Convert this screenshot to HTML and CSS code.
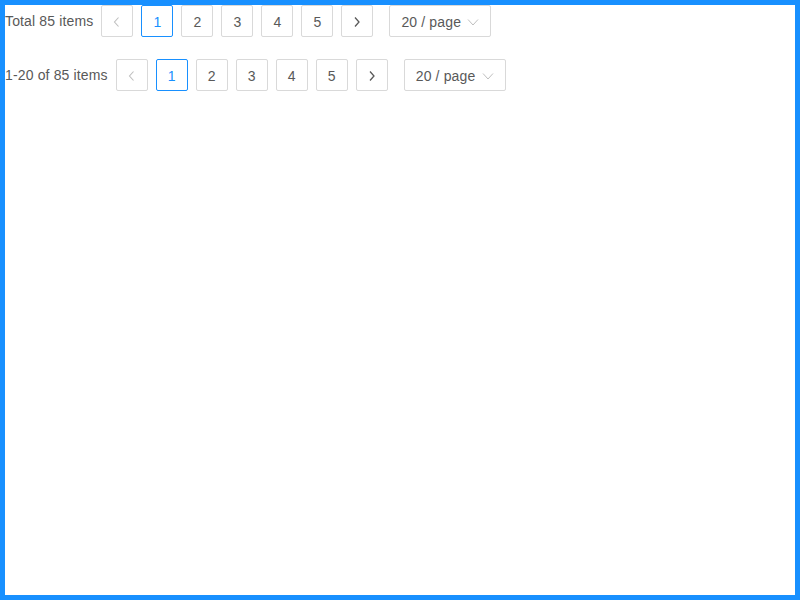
FILE: index.html
```html
<!DOCTYPE html>
<html>
<head>
<meta charset="utf-8">
<link rel="stylesheet" href="styles.css">
</head>
<body>
<div class="frame">
  <ul class="pagination">
    <li class="total">Total 85 items</li>
    <li class="item arrow disabled"><svg width="12" height="12" viewBox="0 0 12 12"><polyline points="7.5,1.5 3.5,6 7.5,10.5" fill="none" stroke="currentColor" stroke-width="1.1"/></svg></li>
    <li class="item active">1</li>
    <li class="item">2</li>
    <li class="item">3</li>
    <li class="item">4</li>
    <li class="item">5</li>
    <li class="item arrow"><svg width="12" height="12" viewBox="0 0 12 12"><polyline points="4,1.5 8,6 4,10.5" fill="none" stroke="currentColor" stroke-width="1.3"/></svg></li>
    <li class="select"><span>20 / page</span><svg width="12" height="12" viewBox="0 0 12 12"><polyline points="1,3.5 6,9 11,3.5" fill="none" stroke="currentColor" stroke-width="1"/></svg></li>
  </ul>
  <ul class="pagination second">
    <li class="total">1-20 of 85 items</li>
    <li class="item arrow disabled"><svg width="12" height="12" viewBox="0 0 12 12"><polyline points="7.5,1.5 3.5,6 7.5,10.5" fill="none" stroke="currentColor" stroke-width="1.1"/></svg></li>
    <li class="item active">1</li>
    <li class="item">2</li>
    <li class="item">3</li>
    <li class="item">4</li>
    <li class="item">5</li>
    <li class="item arrow"><svg width="12" height="12" viewBox="0 0 12 12"><polyline points="4,1.5 8,6 4,10.5" fill="none" stroke="currentColor" stroke-width="1.3"/></svg></li>
    <li class="select"><span>20 / page</span><svg width="12" height="12" viewBox="0 0 12 12"><polyline points="1,3.5 6,9 11,3.5" fill="none" stroke="currentColor" stroke-width="1"/></svg></li>
  </ul>
</div>
</body>
</html>
```
FILE: styles.css
```css
html, body {
  margin: 0;
  padding: 0;
}
body {
  font-family: "Liberation Sans", Arial, sans-serif;
  font-size: 14px;
  letter-spacing: 0.145px;
  color: #595959;
  background: #fff;
}
.frame {
  box-sizing: border-box;
  width: 800px;
  height: 600px;
  border: 5px solid #1890ff;
}
.pagination {
  list-style: none;
  margin: 0;
  padding: 0;
  display: flex;
  align-items: center;
  height: 32px;
}
.pagination.second {
  margin-top: 22px;
}
.total {
  line-height: 32px;
  margin-right: 8px;
}
.item {
  box-sizing: border-box;
  width: 32px;
  height: 32px;
  border: 1px solid #d9d9d9;
  border-radius: 2px;
  margin-right: 8px;
  display: flex;
  align-items: center;
  justify-content: center;
  color: #595959;
  background: #fff;
  padding-top: 1px;
}
.item.active {
  border-color: #1890ff;
  color: #1890ff;
}
.item.arrow {
  color: #595959;
}
.item.disabled {
  color: #bfbfbf;
}
.select {
  box-sizing: border-box;
  width: 102px;
  height: 32px;
  margin-left: 8px;
  border: 1px solid #d9d9d9;
  border-radius: 2px;
  display: flex;
  align-items: center;
  justify-content: space-between;
  padding: 1px 11px 0;
}
.select svg {
  color: #bfbfbf;
}
```
